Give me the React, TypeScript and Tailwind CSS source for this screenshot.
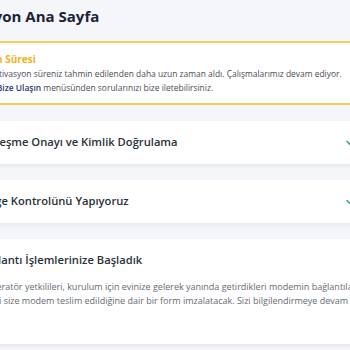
import { ChevronDown, Check } from "lucide-react";

const font = { fontFamily: '"Open Sans", "Noto Sans", sans-serif' };

const StepCard = ({ title, lines }: { title: string; lines?: string[] }) => {
  return (
    <div className="bg-white rounded-lg shadow-[0_2px_4px_rgba(20,30,60,0.07)]">
      <div className="flex items-center gap-4 pl-5 pr-[20px] h-[43px]">
        <div className="w-[24px] h-[24px] rounded-full bg-[#e7f5ee] flex items-center justify-center">
          <Check size={13} className="text-[#3aa36b]" />
        </div>
        <p className="flex-1 text-[11.2px] font-semibold text-[#2a2f3a] whitespace-nowrap">{title}</p>
        {!lines && <ChevronDown size={12} strokeWidth={3} className="text-[#3aa36b]" />}
      </div>
      {lines && (
        <div className="pl-[66px] pr-4 -mt-[2px] pb-[36px]">
          {lines.map((l) => (
            <p key={l} className="text-[9px] leading-[14px] text-[#666b73] whitespace-nowrap">
              {l}
            </p>
          ))}
        </div>
      )}
    </div>
  );
};

export default function App() {
  return (
    <div className="w-[350px] h-[350px] overflow-hidden bg-[#f5f6fa]" style={font}>
      <div className="-ml-[82px] w-[458px] flex flex-col">
        <h1 className="pl-[20px] pt-[2px] h-[41px] text-[15px] leading-[28px] font-bold text-[#1b2437] whitespace-nowrap">
          Aktivasyon Ana Sayfa
        </h1>

        <div className="bg-white border-y-2 border-[#f6cd55] h-[64px] pl-[29px] pt-[9px]">
          <p className="text-[10px] leading-[15px] font-bold text-[#f0b323] whitespace-nowrap">
            Aktivasyon Süresi
          </p>
          <div className="pl-[9px]">
            <p className="text-[8.45px] leading-[14px] text-[#4a4d55] whitespace-nowrap">
              İnternet aktivasyon süreniz tahmin edilenden daha uzun zaman aldı. Çalışmalarımız devam ediyor.
            </p>
            <p className="text-[8.45px] leading-[14px] text-[#4a4d55] whitespace-nowrap">
              Dilerseniz <span className="font-semibold text-[#1f3b73]">Bize Ulaşın</span> menüsünden sorularınızı bize iletebilirsiniz.
            </p>
          </div>
        </div>

        <div className="flex flex-col gap-[16px] mt-[16px]">
          <StepCard title="Sözleşme Onayı ve Kimlik Doğrulama" />
          <StepCard title="Bölge Kontrolünü Yapıyoruz" />
          <StepCard
            title="Bağlantı İşlemlerinize Başladık"
            lines={[
              "Operatör yetkilileri, kurulum için evinize gelerek yanında getirdikleri modemin bağlantılarını yapacak,",
              "yani size modem teslim edildiğine dair bir form imzalatacak. Sizi bilgilendirmeye devam",
            ]}
          />
        </div>
      </div>
    </div>
  );
}
